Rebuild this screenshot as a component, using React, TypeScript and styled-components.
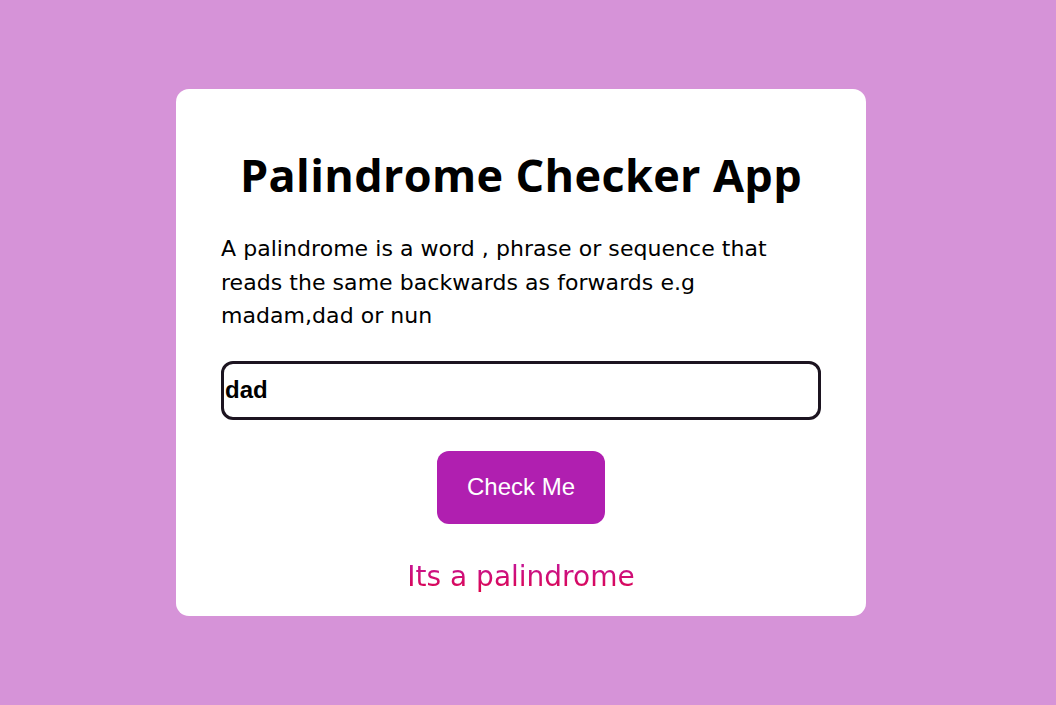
import React, { useState } from "react";
import styled, { createGlobalStyle } from "styled-components";

const GlobalStyle = createGlobalStyle`
  html, body {
    margin: 0;
    padding: 0;
    background: #d693d8;
  }
  body {
    font-family: "DejaVu Sans", "Open Sans", sans-serif;
  }
`;

const Page = styled.main`
  min-height: 705px;
  display: flex;
  align-items: center;
  padding-left: 176px;
  box-sizing: border-box;
`;

const Card = styled.section`
  width: 690px;
  box-sizing: border-box;
  background: #ffffff;
  border-radius: 13px;
  padding: 59px 45px 19px;
  display: flex;
  flex-direction: column;
`;

const Title = styled.h1`
  margin: 0;
  font-family: "Open Sans", "DejaVu Sans", sans-serif;
  font-weight: 700;
  font-size: 45px;
  letter-spacing: 0.35px;
  line-height: 53px;
  color: #000;
  text-align: center;
`;

const Description = styled.p`
  margin: 31px 0 0;
  font-family: "DejaVu Sans", sans-serif;
  font-size: 22px;
  letter-spacing: 0.05px;
  line-height: 33.5px;
  color: #000;
`;

const TextInput = styled.input`
  margin-top: 28px;
  width: 600px;
  height: 59px;
  box-sizing: border-box;
  border: 3px solid #1c1420;
  border-radius: 12px;
  padding: 0 0 0 1px;
  font-family: "Liberation Sans", Arial, sans-serif;
  font-weight: 700;
  font-size: 24px;
  color: #000;
  background: #fff;
  outline: none;
  caret-color: #000;
`;

const CheckButton = styled.button`
  align-self: center;
  margin-top: 31px;
  width: 168px;
  height: 73px;
  border: none;
  border-radius: 12px;
  background: #b01fb0;
  color: #ffffff;
  font-family: "Liberation Sans", Arial, sans-serif;
  font-size: 24px;
  cursor: pointer;
`;

const Result = styled.p`
  margin: 33px 0 0;
  text-align: center;
  font-family: "DejaVu Sans", sans-serif;
  font-size: 28px;
  line-height: 40px;
  background: linear-gradient(to bottom, #c01aa6, #e2003e);
  -webkit-background-clip: text;
  background-clip: text;
  color: transparent;
`;

export default function App() {
  const [value, setValue] = useState("dad");
  const [result, setResult] = useState("Its a palindrome");

  const check = () => {
    const clean = value.toLowerCase().replace(/[^a-z0-9]/g, "");
    const isPal = clean.length > 0 && clean === clean.split("").reverse().join("");
    setResult(isPal ? "Its a palindrome" : "Its not a palindrome");
  };

  return (
    <>
      <GlobalStyle />
      <Page>
        <Card>
          <Title>Palindrome Checker App</Title>
          <Description>
            A palindrome is a word , phrase or sequence that reads the same backwards as forwards e.g madam,dad or nun
          </Description>
          <TextInput
            autoFocus
            value={value}
            onChange={(e) => setValue(e.target.value)}
          />
          <CheckButton onClick={check}>Check Me</CheckButton>
          <Result>{result}</Result>
        </Card>
      </Page>
    </>
  );
}
